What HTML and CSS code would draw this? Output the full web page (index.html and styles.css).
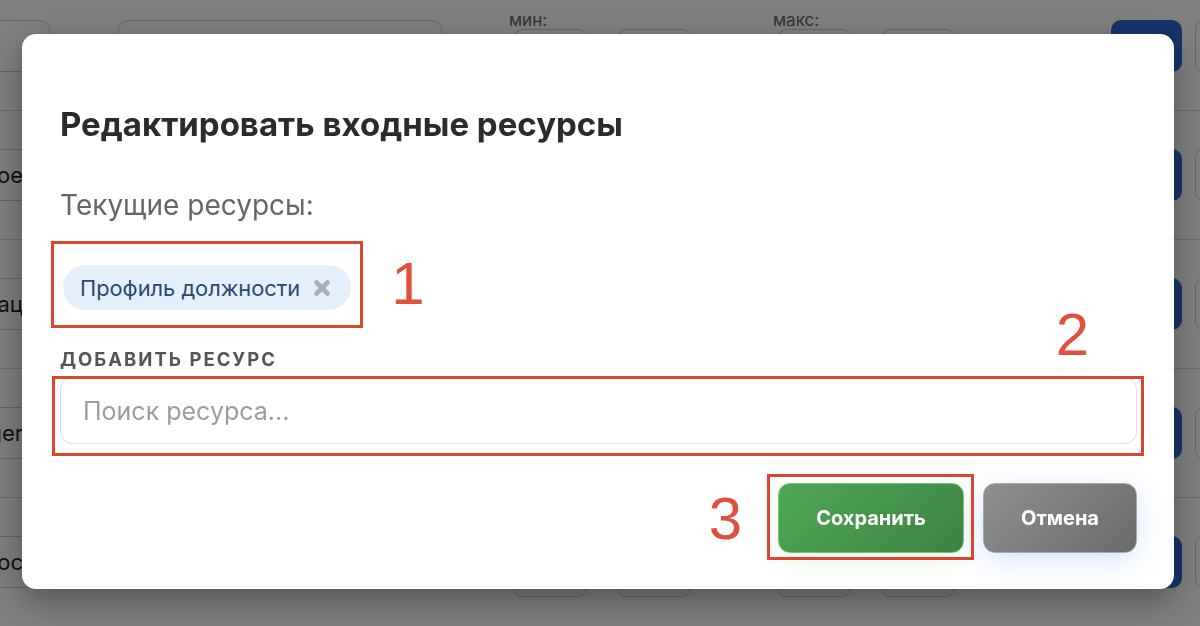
FILE: index.html
```html
<!DOCTYPE html>
<html lang="ru">
<head>
    <meta charset="UTF-8">
    <meta name="viewport" content="width=device-width, initial-scale=1.0">
    <title>Редактировать входные ресурсы</title>
    <link rel="stylesheet" href="styles.css">
</head>
<body>
    <!-- страница под модальным окном -->
    <div class="page">
        <div class="row">
            <div class="field name"></div>
            <div class="field wide"></div>
            <div class="range range-min">
                <span class="range-label">мин:</span>
                <div class="range-inputs"><div class="field small"></div><div class="field small"></div></div>
            </div>
            <div class="range range-max">
                <span class="range-label">макс:</span>
                <div class="range-inputs"><div class="field small"></div><div class="field small"></div></div>
            </div>
            <div class="btn-blue"></div>
            <div class="btn-outline"></div>
        </div>
        <div class="row">
            <div class="field name">Входное</div>
            <div class="field wide"></div>
            <div class="range range-min">
                <span class="range-label">мин:</span>
                <div class="range-inputs"><div class="field small"></div><div class="field small"></div></div>
            </div>
            <div class="range range-max">
                <span class="range-label">макс:</span>
                <div class="range-inputs"><div class="field small"></div><div class="field small"></div></div>
            </div>
            <div class="btn-blue"></div>
            <div class="btn-outline"></div>
        </div>
        <div class="row">
            <div class="field name">Квалификац</div>
            <div class="field wide"></div>
            <div class="range range-min">
                <span class="range-label">мин:</span>
                <div class="range-inputs"><div class="field small"></div><div class="field small"></div></div>
            </div>
            <div class="range range-max">
                <span class="range-label">макс:</span>
                <div class="range-inputs"><div class="field small"></div><div class="field small"></div></div>
            </div>
            <div class="btn-blue"></div>
            <div class="btn-outline"></div>
        </div>
        <div class="row">
            <div class="field name">Manager</div>
            <div class="field wide"></div>
            <div class="range range-min">
                <span class="range-label">мин:</span>
                <div class="range-inputs"><div class="field small"></div><div class="field small"></div></div>
            </div>
            <div class="range range-max">
                <span class="range-label">макс:</span>
                <div class="range-inputs"><div class="field small"></div><div class="field small"></div></div>
            </div>
            <div class="btn-blue"></div>
            <div class="btn-outline"></div>
        </div>
        <div class="row">
            <div class="field name">Запрос</div>
            <div class="field wide"></div>
            <div class="range range-min">
                <span class="range-label">мин:</span>
                <div class="range-inputs"><div class="field small"></div><div class="field small"></div></div>
            </div>
            <div class="range range-max">
                <span class="range-label">макс:</span>
                <div class="range-inputs"><div class="field small"></div><div class="field small"></div></div>
            </div>
            <div class="btn-blue"></div>
            <div class="btn-outline"></div>
        </div>
    </div>

    <!-- модальное окно -->
    <div class="overlay">
        <div class="modal">
            <h2 class="modal-title">Редактировать входные ресурсы</h2>
            <p class="modal-subtitle">Текущие ресурсы:</p>

            <div class="chips">
                <div class="mark mark-chip">
                    <span class="chip">
                        Профиль должности
                        <svg class="chip-remove" width="18" height="18" viewBox="0 0 18 18">
                            <path d="M3.5 3.5 L14.5 14.5 M14.5 3.5 L3.5 14.5" stroke="#a9aeb5" stroke-width="4.6" stroke-linecap="round"/>
                        </svg>
                    </span>
                    <span class="num num-1">1</span>
                </div>
            </div>

            <label class="field-label" for="resourceSearch">Добавить ресурс</label>
            <div class="mark mark-input">
                <input type="text" id="resourceSearch" class="search-input" placeholder="Поиск ресурса...">
                <span class="num num-2">2</span>
            </div>

            <div class="modal-actions">
                <div class="mark mark-save">
                    <button class="btn btn-save">Сохранить</button>
                    <span class="num num-3">3</span>
                </div>
                <button class="btn btn-cancel">Отмена</button>
            </div>
        </div>
    </div>
</body>
</html>
```

FILE: styles.css
```css
body {
    margin: 0;
    width: 1200px;
    height: 626px;
    overflow: hidden;
    background-color: #fff;
    font-family: Inter, "Noto Sans", sans-serif;
}

/* страница за затемнением */
.page {
    width: 1420px;
    margin: -18px 0 0 -150px;
}

.row {
    display: flex;
    align-items: center;
    height: 129px;
    border-bottom: 1px solid #d3d9e3;
    box-sizing: border-box;
}

.field {
    height: 52px;
    border: 1px solid #c6cdd8;
    border-radius: 10px;
    background-color: #fff;
    box-sizing: border-box;
}

.name {
    width: 200px;
    display: flex;
    align-items: center;
    justify-content: flex-end;
    padding-right: 26px;
    font-size: 22px;
    color: #222;
    white-space: nowrap;
    overflow: hidden;
}

.wide {
    width: 324px;
    margin-left: 68px;
}

.range {
    display: flex;
    flex-direction: column;
}

.range-min {
    margin-left: 71px;
}

.range-max {
    margin-left: 86px;
}

.range-label {
    font-size: 17px;
    line-height: 17px;
    color: #666;
    margin-left: -4px;
}

.range-inputs {
    display: flex;
    gap: 30px;
}

.small {
    width: 74px;
}

.btn-blue {
    width: 71px;
    height: 52px;
    margin-left: 156px;
    border-radius: 10px;
    background-color: #2b6ad6;
}

.btn-outline {
    width: 60px;
    height: 52px;
    margin-left: 13px;
    border: 1px solid #c6cdd8;
    border-radius: 10px;
}

/* затемнение и окно */
.overlay {
    position: fixed;
    top: 0;
    left: 0;
    right: 0;
    bottom: 0;
    padding: 34px 0 0 22px;
    background-color: rgba(0, 0, 0, 0.5);
    box-sizing: border-box;
}

.modal {
    width: 1152px;
    height: 555px;
    padding: 70px 37px 0 38px;
    background-color: #fff;
    border-radius: 14px;
    box-shadow: 0 12px 34px rgba(0, 0, 0, 0.35);
    box-sizing: border-box;
}

.modal-title {
    margin: 0;
    font-size: 33px;
    line-height: 40px;
    font-weight: 700;
    color: #2b2b2b;
}

.modal-subtitle {
    margin: 44px 0 0;
    font-size: 28px;
    line-height: 34px;
    color: #666;
}

.chips {
    display: flex;
    margin-top: 43px;
    padding-left: 3px;
}

.chip {
    display: inline-flex;
    align-items: center;
    gap: 13px;
    height: 45px;
    padding: 0 20px 0 17px;
    border-radius: 23px;
    background-color: #e4effc;
    color: #2a4872;
    font-size: 21.8px;
}

.chip-remove {
    display: block;
}

.field-label {
    display: block;
    margin-top: 38px;
    font-size: 18.5px;
    line-height: 22px;
    font-weight: 700;
    letter-spacing: 2px;
    text-transform: uppercase;
    color: #555;
}

.search-input {
    display: block;
    width: 100%;
    height: 67px;
    padding: 0 22px;
    border: 1.5px solid #d5e1f2;
    border-radius: 12px;
    font-family: inherit;
    font-size: 25px;
    color: #333;
    box-sizing: border-box;
    outline: none;
}

.search-input::placeholder {
    color: #9c9c9c;
}

.mark-input {
    margin-top: 7px;
}

.modal-actions {
    display: flex;
    justify-content: flex-end;
    gap: 19px;
    margin-top: 39px;
}

.btn {
    height: 70px;
    border-radius: 12px;
    font-family: inherit;
    font-size: 20px;
    font-weight: 700;
    color: #fff;
    cursor: pointer;
}

.btn-save {
    width: 186px;
    border: 1.5px solid #7cc07f;
    background: linear-gradient(135deg, #4fa855, #3c8341);
    box-shadow: 0 8px 26px rgba(76, 175, 80, 0.14);
}

.btn-cancel {
    width: 154px;
    border: 1.5px solid #a8a8a8;
    background: linear-gradient(135deg, #909090, #6a6a6a);
    box-shadow: 0 8px 30px rgba(70, 120, 255, 0.2);
}

/* пометки поверх интерфейса */
.mark {
    position: relative;
}

.mark::after {
    content: "";
    position: absolute;
    border: 3px solid #dc4631;
    pointer-events: none;
}

.mark-chip::after {
    top: -24px;
    bottom: -18px;
    left: -12px;
    right: -12px;
}

.mark-input::after {
    top: -1px;
    bottom: -12px;
    left: -8px;
    right: -7px;
}

.mark-save::after {
    top: -9px;
    bottom: -7px;
    left: -11px;
    right: -10px;
}

.num {
    position: absolute;
    font-family: "Liberation Sans", Arial, sans-serif;
    font-size: 60px;
    line-height: 60px;
    color: #e0503a;
}

.num-1 {
    top: -11px;
    left: calc(100% + 40px);
}

.num-2 {
    top: -72px;
    right: 48px;
}

.num-3 {
    top: 6px;
    right: calc(100% + 36px);
}
```
